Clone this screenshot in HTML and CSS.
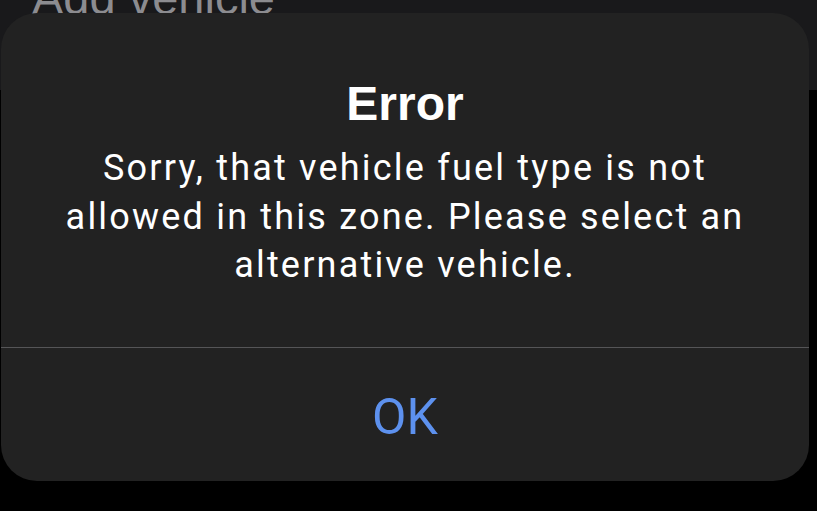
FILE: index.html
```html
<!DOCTYPE html>
<html lang="en">
<head>
    <meta charset="UTF-8">
    <meta name="viewport" content="width=device-width, initial-scale=1.0">
    <title>Error</title>
    <link rel="stylesheet" href="styles.css">
</head>
<body>
    <div class="screen">
        <div class="header">
            <h2 class="header-title">Add vehicle</h2>
        </div>
    </div>

    <div class="alert">
        <div class="alert-body">
            <h1 class="alert-title">Error</h1>
            <p class="alert-message">Sorry, that vehicle fuel type is not<br>allowed in this zone. Please select an<br>alternative vehicle.</p>
        </div>
        <button class="alert-btn">OK</button>
    </div>
</body>
</html>
```

FILE: styles.css
```css
body {
    margin: 0;
    padding: 0;
    background-color: #000;
    font-family: Roboto, 'Liberation Sans', sans-serif;
    width: 817px;
    height: 511px;
    overflow: hidden;
    position: relative;
}

.header {
    height: 90px;
    background-color: #19191b;
    overflow: hidden;
}

.header-title {
    margin: -26px 0 0 32px;
    font-family: 'Liberation Sans', Arial, sans-serif;
    font-size: 47px;
    font-weight: normal;
    color: #8c8c90;
    line-height: 1;
}

.alert {
    position: absolute;
    left: 1px;
    top: 13px;
    width: 808px;
    height: 468px;
    background-color: #222222;
    border-radius: 36px;
    display: flex;
    flex-direction: column;
    overflow: hidden;
}

.alert-body {
    height: 335px;
    border-bottom: 1px solid #555557;
    text-align: center;
    box-sizing: border-box;
    padding-top: 64px;
}

.alert-title {
    margin: 0;
    color: #fff;
    font-family: 'Liberation Sans', Arial, sans-serif;
    font-size: 48px;
    font-weight: bold;
    line-height: 54px;
}

.alert-message {
    margin: 13px 0 0;
    color: #fff;
    font-size: 36px;
    line-height: 48.5px;
    letter-spacing: 2.2px;
    white-space: nowrap;
}

.alert-btn {
    flex: 1;
    border: none;
    background: none;
    color: #5d91ee;
    font-family: Roboto, 'Liberation Sans', sans-serif;
    font-size: 50px;
    padding: 4px 0 0;
}
```
